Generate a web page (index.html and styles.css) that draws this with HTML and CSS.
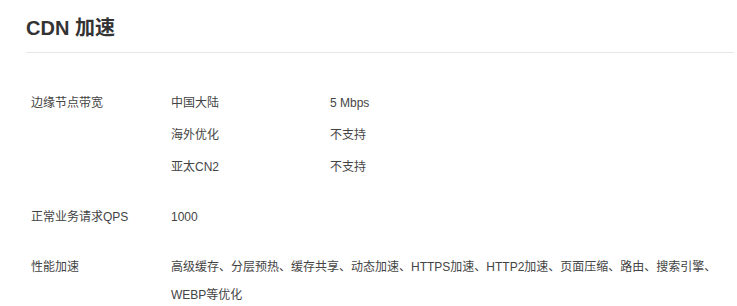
FILE: index.html
```html
<!DOCTYPE html>
<html lang="zh-CN">
<head>
<meta charset="utf-8">
<title>CDN 加速</title>
<link rel="stylesheet" href="styles.css">
</head>
<body>
<div class="panel">
  <h2 class="title">CDN 加速</h2>
  <div class="spec">
    <div class="row row-bw">
      <div class="label">边缘节点带宽</div>
      <div class="value">
        <div class="sub"><span class="region">中国大陆</span><span>5 Mbps</span></div>
        <div class="sub"><span class="region">海外优化</span><span>不支持</span></div>
        <div class="sub"><span class="region">亚太CN2</span><span>不支持</span></div>
      </div>
    </div>
    <div class="row row-qps">
      <div class="label">正常业务请求QPS</div>
      <div class="value">1000</div>
    </div>
    <div class="row row-perf">
      <div class="label">性能加速</div>
      <div class="value">高级缓存、分层预热、缓存共享、动态加速、HTTPS加速、HTTP2加速、页面压缩、路由、搜索引擎、WEBP等优化</div>
    </div>
  </div>
</div>
</body>
</html>
```
FILE: styles.css
```css
html, body {
  margin: 0;
  padding: 0;
  background: #ffffff;
}
body {
  font-family: "Liberation Sans", Arial, "Noto Sans CJK SC", sans-serif;
  color: #333333;
}
.panel {
  padding: 14px 3px 0 26px;
}
.title {
  margin: 0;
  font-size: 20px;
  font-weight: bold;
  line-height: 28px;
  color: #333333;
  padding-bottom: 10px;
  border-bottom: 1px solid #e6e6eb;
}
.spec {
  padding: 34px 0 0 5px;
  font-size: 12px;
  color: #444444;
}
.row {
  display: grid;
  grid-template-columns: 140px 1fr;
}
.label, .value {
  line-height: 32px;
}
.sub {
  display: grid;
  grid-template-columns: 159px 1fr;
}
.row-qps {
  margin-top: 18px;
}
.row-perf {
  margin-top: 20px;
}
.row-perf .label {
  line-height: 28px;
}
.row-perf .value {
  line-height: 28px;
}
```
